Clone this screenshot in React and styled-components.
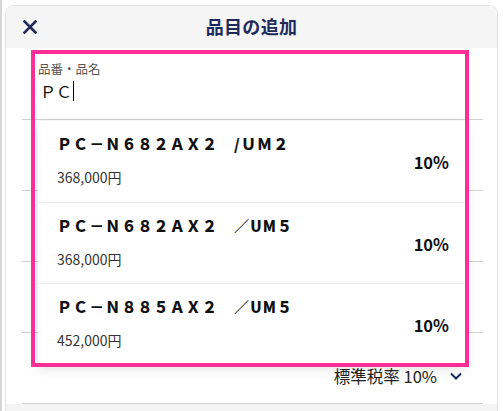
import React from 'react';
import styled, { createGlobalStyle } from 'styled-components';

const GlobalStyle = createGlobalStyle`
  body {
    margin: 0;
    background: #ffffff;
    font-family: "Noto Sans CJK JP", "Noto Sans", sans-serif;
    color: #222;
  }
`;

const items = [
  { name: 'ＰＣ－Ｎ６８２ＡＸ２\u3000/ＵＭ２', price: '368,000円', rate: '10%' },
  { name: 'ＰＣ－Ｎ６８２ＡＸ２\u3000／UM５', price: '368,000円', rate: '10%' },
  { name: 'ＰＣ－Ｎ８８５ＡＸ２\u3000／UM５', price: '452,000円', rate: '10%' },
];

const CloseIcon = () => (
  <svg width="14" height="14" viewBox="0 0 14 14">
    <path d="M1.5 1.5 L12.5 12.5 M12.5 1.5 L1.5 12.5" stroke="#1f2a5c" strokeWidth="2.6" strokeLinecap="square" />
  </svg>
);

const Chevron = () => (
  <svg width="12" height="8" viewBox="0 0 12 8">
    <path d="M1 1.5 L6 6.5 L11 1.5" fill="none" stroke="#1f2a5c" strokeWidth="2" />
  </svg>
);

const App = () => {
  return (
    <>
      <GlobalStyle />
      <Page>
        <Modal>
          <Header>
            <CloseButton>
              <CloseIcon />
            </CloseButton>
            <Title>品目の追加</Title>
            <span />
          </Header>
          <Form>
            <InputRow>
              <Label>品番・品名</Label>
              <Value>
                ＰＣ<Caret />
              </Value>
            </InputRow>
            <Row />
            <Row />
            <Row />
            <Row $end>
              <TaxSelect>
                標準税率 10%
                <Chevron />
              </TaxSelect>
            </Row>
          </Form>
          <Footer />

          <Dropdown>
            {items.map(item => (
              <Item key={item.name}>
                <ItemText>
                  <ItemName>{item.name}</ItemName>
                  <ItemPrice>{item.price}</ItemPrice>
                </ItemText>
                <ItemRate>{item.rate}</ItemRate>
              </Item>
            ))}
          </Dropdown>

          <Highlight />
        </Modal>
      </Page>
    </>
  );
};

export default App;

const Page = styled.div`
  height: 411px;
  box-sizing: border-box;
  padding: 5px 5px 0 5px;
  border-left: 2px solid #d6d6d6;
  overflow: hidden;
`;

const Modal = styled.div`
  position: relative;
  height: 410px;
  margin-left: -2px;
  background: #fff;
  border: 1px solid #e0e0e0;
  border-bottom: none;
  border-radius: 9px 9px 0 0;
  display: flex;
  flex-direction: column;
`;

const Header = styled.div`
  height: 42px;
  flex-shrink: 0;
  display: grid;
  grid-template-columns: 48px 1fr 48px;
  align-items: center;
  background: #f5f5f6;
  border-radius: 9px 9px 0 0;
`;

const CloseButton = styled.div`
  display: flex;
  align-items: center;
  padding-left: 17px;
  padding-bottom: 1px;
`;

const Title = styled.h1`
  margin: 0 0 3px;
  text-align: center;
  font-size: 18px;
  font-weight: 700;
  color: #1f2a5c;
  letter-spacing: 0.3px;
`;

const Form = styled.div`
  padding: 0 14px 0 16px;
  background: #fff;
`;

const InputRow = styled.div`
  height: 72px;
  box-sizing: border-box;
  padding: 12px 0 0 16px;
  border-bottom: 1px solid #cfd2d4;
`;

const Label = styled.div`
  font-size: 12.5px;
  line-height: 18px;
  color: #555;
`;

const Value = styled.div`
  display: flex;
  align-items: center;
  margin-top: 2px;
  margin-left: 2px;
  font-size: 16px;
  line-height: 22px;
  color: #111;
`;

const Caret = styled.span`
  display: inline-block;
  width: 1px;
  height: 20px;
  margin-left: 1px;
  background: #000;
`;

const Row = styled.div`
  height: 71px;
  box-sizing: border-box;
  border-bottom: 1px solid #cfd2d4;
  display: flex;
  justify-content: flex-end;
  align-items: ${p => (p.$end ? 'flex-end' : 'center')};
  padding: ${p => (p.$end ? '0 21px 16px 0' : '0')};
`;

const TaxSelect = styled.div`
  display: flex;
  align-items: center;
  gap: 13px;
  font-size: 16.5px;
  line-height: 22px;
  color: #222;
`;

const Footer = styled.div`
  flex: 1;
  background: #f4f4f4;
`;

const Dropdown = styled.div`
  position: absolute;
  left: 32px;
  top: 115px;
  width: 427px;
  background: #fff;
  box-shadow: 0 4px 12px rgba(0, 0, 0, 0.14);
  z-index: 2;
`;

const Item = styled.div`
  height: 81px;
  box-sizing: border-box;
  display: grid;
  grid-template-columns: 1fr auto;
  align-items: center;
  padding: 0 16px 0 19px;
  border-top: 1px solid #ececec;

  &:first-child {
    border-top: none;
  }
`;

const ItemText = styled.div`
  display: flex;
  flex-direction: column;
  align-self: start;
  padding-top: 13px;
`;

const ItemName = styled.div`
  font-size: 15px;
  line-height: 20px;
  font-weight: 900;
  color: #111;
  letter-spacing: 1.1px;
  white-space: pre;
`;

const ItemPrice = styled.div`
  margin-top: 14px;
  font-size: 14px;
  line-height: 19px;
  color: #333;
`;

const ItemRate = styled.div`
  font-size: 16.5px;
  font-weight: 700;
  color: #111;
  padding-top: 1px;
`;

const Highlight = styled.div`
  position: absolute;
  left: 25px;
  top: 44px;
  width: 438px;
  height: 317px;
  box-sizing: border-box;
  border: 4px solid #ff2e96;
  z-index: 3;
  pointer-events: none;
`;
